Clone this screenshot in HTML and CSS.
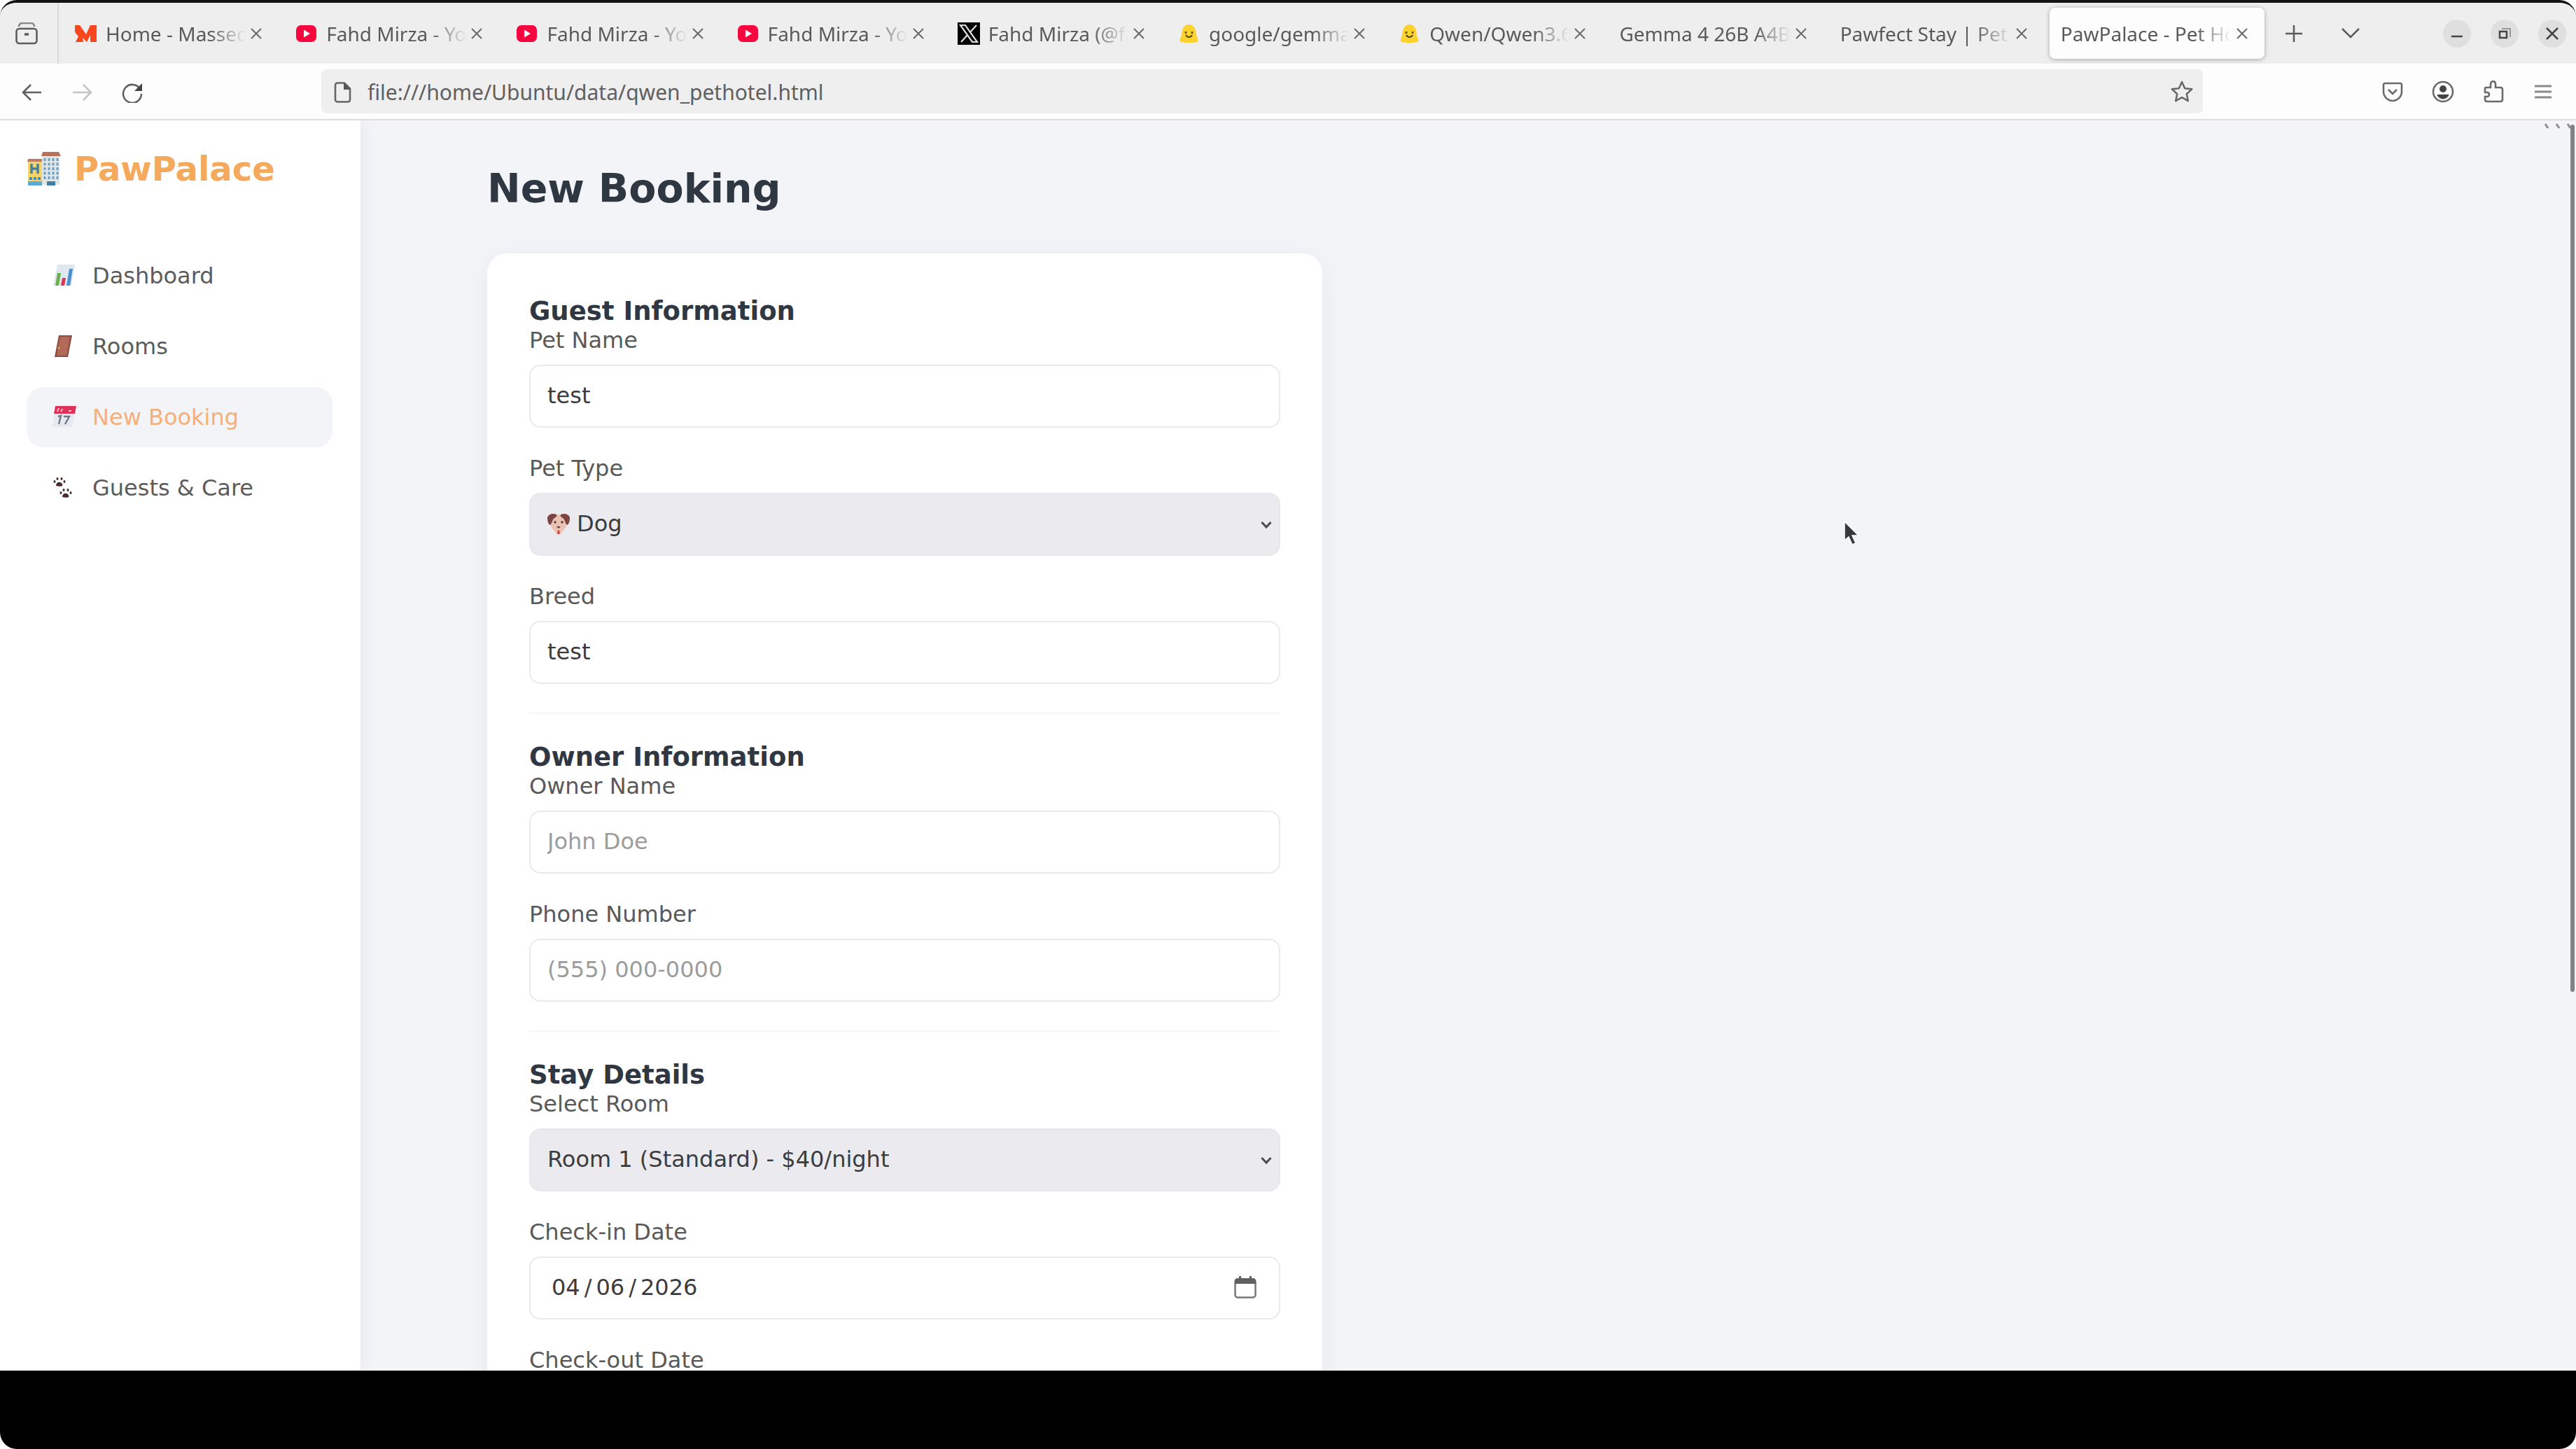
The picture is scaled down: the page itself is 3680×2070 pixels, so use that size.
FILE: index.html
```html
<!DOCTYPE html>
<html lang="en-US">
<head>
<meta charset="utf-8">
<title>PawPalace - Pet Hotel</title>
<link rel="stylesheet" href="styles.css">
</head>
<body>
<svg class="defs" aria-hidden="true">
  <symbol id="close" viewBox="0 0 18 18"><path d="M2 2l14 14M16 2L2 16" fill="none" stroke="#6a6a6a" stroke-width="2"/></symbol>
  <symbol id="tube" viewBox="0 0 32 32"><rect x="1" y="4" width="29" height="24" rx="7" fill="#f5063f"/><path d="M12 10.500l9 5.500-9 5.500z" fill="#fff"/></symbol>
  <symbol id="hug" viewBox="0 0 32 32"><path d="M3 28c-1-4 1-7 2-9C5 9 9 3 15.500 3S26 9 26 19c1 2 3 5 2 9-8 1.500-17 1.500-25 0z" fill="#fcd22f"/><path d="M11 13v3M20 13v3" stroke="#5b4a20" stroke-width="2.500"/><path d="M11 18c2 4 7 4 9 0" fill="none" stroke="#5b4a20" stroke-width="2"/></symbol>
  <symbol id="chev" viewBox="0 0 16 12"><path d="M1.500 2L8 9l6.500-7" fill="none" stroke="#4a4a50" stroke-width="3"/></symbol>
</svg>
<div class="window">
  <header class="tabbar">
    <button class="recent" aria-label="Recent browsing"><svg class="icon" viewBox="0 0 32 32" fill="none" stroke="#5c5c5c" stroke-width="2.600"><rect x="1.500" y="9" width="29" height="21" rx="4"/><path d="M5 6c0-3 2-5 5-5h12c3 0 5 2 5 5" stroke="#888"/><path d="M13 17h6" stroke-width="3.500"/></svg></button>
    <nav class="tabs" aria-label="Tabs">
      <div class="tab"><svg class="icon" viewBox="0 0 32 32"><path d="M0 4h7l9 13 6-13h9v24h-9V18l-5 10-6-6 1 6H1l4-8-5-6z" fill="#f9461c"/></svg><button class="title">Home - Massed Compute</button><button class="x" aria-label="Close tab"><svg><use href="#close"/></svg></button></div>
      <div class="tab"><svg class="icon"><use href="#tube"/></svg><button class="title">Fahd Mirza - YouTube</button><button class="x" aria-label="Close tab"><svg><use href="#close"/></svg></button></div>
      <div class="tab"><svg class="icon"><use href="#tube"/></svg><button class="title">Fahd Mirza - YouTube</button><button class="x" aria-label="Close tab"><svg><use href="#close"/></svg></button></div>
      <div class="tab"><svg class="icon"><use href="#tube"/></svg><button class="title">Fahd Mirza - YouTube</button><button class="x" aria-label="Close tab"><svg><use href="#close"/></svg></button></div>
      <div class="tab"><svg class="icon" viewBox="0 0 32 32"><path d="M0 0h32v32H0z"/><path d="M4 4h7l17 24h-7zM27 4L17.500 14.500M5 28l9.500-10.500" fill="none" stroke="#ddd" stroke-width="2.200"/></svg><button class="title">Fahd Mirza (@fahdmirza)</button><button class="x" aria-label="Close tab"><svg><use href="#close"/></svg></button></div>
      <div class="tab"><svg class="icon"><use href="#hug"/></svg><button class="title">google/gemma-4</button><button class="x" aria-label="Close tab"><svg><use href="#close"/></svg></button></div>
      <div class="tab"><svg class="icon"><use href="#hug"/></svg><button class="title">Qwen/Qwen3.6</button><button class="x" aria-label="Close tab"><svg><use href="#close"/></svg></button></div>
      <div class="tab"><button class="title">Gemma 4 26B A4B vs</button><button class="x" aria-label="Close tab"><svg><use href="#close"/></svg></button></div>
      <div class="tab"><button class="title">Pawfect Stay | Pet Hotel</button><button class="x" aria-label="Close tab"><svg><use href="#close"/></svg></button></div>
      <div class="tab active"><button class="title">PawPalace - Pet Hotel</button><button class="x" aria-label="Close tab"><svg><use href="#close"/></svg></button></div>
    </nav>
    <div class="tabtools">
      <button aria-label="New tab"><svg class="icon" viewBox="0 0 32 32"><path d="M16 4v24M4 16h24" stroke="#5a5a5a" stroke-width="2.500"/></svg></button>
      <button aria-label="List all tabs"><svg class="icon" viewBox="0 0 32 32"><path d="M4 9l12 12L28 9" fill="none" stroke="#5a5a5a" stroke-width="2.500"/></svg></button>
      <div class="wincontrols">
        <button aria-label="Minimize"><svg viewBox="0 0 40 40"><path d="M12 24h16" stroke="#444" stroke-width="2.500"/></svg></button>
        <button aria-label="Restore"><svg viewBox="0 0 40 40" fill="none"><path d="M16 13h12v12" stroke="#999" stroke-width="2"/><rect x="13" y="17" width="10" height="9" stroke="#444" stroke-width="2.500"/></svg></button>
        <button aria-label="Close"><svg viewBox="0 0 40 40"><path d="M12 12l16 16M28 12L12 28" stroke="#444" stroke-width="2.500"/></svg></button>
      </div>
    </div>
  </header>
  <div class="toolbar">
    <div class="history">
      <button aria-label="Back"><svg class="icon" viewBox="0 0 32 32"><path d="M29 17H3M14 6L3 17l11 11" fill="none" stroke="#5f5f5f" stroke-width="2.600"/></svg></button>
      <button aria-label="Forward"><svg class="icon" viewBox="0 0 32 32"><path d="M2 17h26M17 6l11 11-11 11" fill="none" stroke="#c4c4c4" stroke-width="2.600"/></svg></button>
      <button aria-label="Reload"><svg class="icon" viewBox="0 0 32 32"><path d="M26 12A13 13 0 1 0 28 19" fill="none" stroke="#5f5f5f" stroke-width="2.600"/><path d="M29 4v11H18z" fill="#444"/></svg></button>
    </div>
    <div class="urlbar">
      <svg class="icon" viewBox="0 0 32 32"><path d="M9 3.500h10l8 8V27c0 2-1 3.500-3 3.500H9c-2 0-3-1.500-3-3.500V7c0-2 1-3.500 3-3.500z" fill="none" stroke="#666" stroke-width="2.600"/><path d="M18 3l10 10H18z" fill="#555"/></svg>
      <input type="text" aria-label="Address" value="file:///home/Ubuntu/data/qwen_pethotel.html">
      <button aria-label="Bookmark this page"><svg class="icon" viewBox="0 0 32 32"><path d="M16 2l4.200 9.200 10 1.200-7.400 6.800 2 10L16 24.200 7.200 29.200l2-10L1.800 12.400l10-1.200z" fill="none" stroke="#6a6a6a" stroke-width="2.600" stroke-linejoin="round"/></svg></button>
    </div>
    <div class="actions">
      <button aria-label="Save to Pocket"><svg class="icon" viewBox="0 0 32 32" fill="none" stroke="#6a6a6a" stroke-width="2.600"><path d="M5 4h22c1 0 2 1 2 2v10c0 7-6 13-13 13S3 23 3 16V6c0-1 1-2 2-2z"/><path d="M10 13l6 6 6-6"/></svg></button>
      <button aria-label="Account"><svg class="icon" viewBox="0 0 32 32"><circle cx="16" cy="16" r="14" fill="none" stroke="#6a6a6a" stroke-width="2.600"/><circle cx="16" cy="12" r="5" fill="#444"/><path d="M7.500 20h17c-1 4-5 6.500-8.500 6.500S8.500 24 7.500 20z" fill="#444"/></svg></button>
      <button aria-label="Extensions"><svg class="icon" viewBox="0 0 32 32"><path d="M5 10h7V5c0-5 7-5 7 0v5h7c2 0 3 1 3 3v14c0 2-1 3-3 3H7c-2 0-3-1-3-3v-4h3c4 0 4-6 0-6H4v-5c0-1 0-2 1-2z" fill="none" stroke="#6a6a6a" stroke-width="2.600"/></svg></button>
      <button aria-label="Menu"><svg class="icon" viewBox="0 0 32 32"><path d="M3 8h24M3 16h24M3 24h24" stroke="#8a8a8a" stroke-width="3"/></svg></button>
    </div>
  </div>
  <div class="page">
    <aside class="sidebar">
      <div class="logo">
        <svg viewBox="0 0 50 50"><path d="M2 14h20v34H2z" fill="#f3d36b"/><path d="M2 11h20v4H1z" fill="#c07a5e"/><path d="M22 6h25v42H22z" fill="#dfe6e6"/><path d="M23 1h23l3 6H21z" fill="#b97259"/><path d="M7 18v14M16 18v14M7 25h9" stroke="#4b7f96" stroke-width="3.500"/><path d="M4 37h4v4H4zM10 37h4v4h-4zM16 37h4v4h-4z" fill="#4b8cae"/><path d="M2 43h20v6H2z" fill="#5aa9d6"/><path d="M26 10v30M32 10v30M38 10v30M44 10v30" stroke="#6d9fc6" stroke-width="3" stroke-dasharray="4 2.500"/><path d="M29 43h12v6H29z" fill="#3f7fa6"/></svg>
        <span>PawPalace</span>
      </div>
      <nav class="menu" aria-label="Main">
        <a href="#dashboard"><svg viewBox="0 0 36 36"><path d="M8 2h25l-5 30H2z" fill="#dfe8ee"/><path d="M8 14h5l-3 18H5z" fill="#6fae4e"/><path d="M15 21h5l-2 11h-5z" fill="#d8395a"/><path d="M25 8h5l-4 24h-5z" fill="#4a90cf"/></svg>Dashboard</a>
        <a href="#rooms"><svg viewBox="0 0 36 36"><path d="M10 2h19l-6 31H4z" fill="#8f4d40"/><path d="M12 4h14l-5 27H7z" fill="#b36a58"/><circle cx="10" cy="20" r="1.500" fill="#e0b060"/></svg>Rooms</a>
        <a href="#booking" class="active" aria-current="page"><svg viewBox="0 0 36 36"><path d="M5 4h29l-5 28H1z" fill="#e6eaf0"/><path d="M5 2h30l-2 11H3z" fill="#dd3358"/><path d="M8 10l2-5M13 10l2-4M24 9h4" stroke="#f6b9c6" stroke-width="2"/><path d="M9 17l4-1-3 12M17 17h8l-6 11" fill="none" stroke="#6d7883" stroke-width="2.400"/></svg>New Booking</a>
        <a href="#guests"><svg viewBox="0 0 36 36" fill="#4a2b2c"><path d="M6 15c0-4 3-6 6-5s4 4 3 5-6 1-9 0z"/><ellipse cx="4" cy="9" rx="1.500" ry="2"/><ellipse cx="8" cy="5" rx="1.500" ry="2"/><ellipse cx="14" cy="5" rx="1.500" ry="2"/><ellipse cx="18" cy="9" rx="1.500" ry="2"/><path d="M15 31c0-4 3-6 6-5s4 4 3 5-6 1-9 0z"/><ellipse cx="13" cy="25" rx="1.500" ry="2"/><ellipse cx="17" cy="21" rx="1.500" ry="2"/><ellipse cx="23" cy="21" rx="1.500" ry="2"/><ellipse cx="27" cy="25" rx="1.500" ry="2"/></svg>Guests &amp; Care</a>
      </nav>
    </aside>
    <main class="content">
      <h1>New Booking</h1>
      <form class="card">
        <section>
          <h2>Guest Information</h2>
          <div class="fields">
            <div class="field"><label for="pet">Pet Name</label><input id="pet" type="text" value="test"></div>
            <div class="field"><label for="type">Pet Type</label>
              <div class="select has-pet"><select id="type"><option>Dog</option></select>
                <svg class="pet" viewBox="0 0 32 32"><path d="M5 5C9 1 23 1 27 5l1 11c-2 7-7 9-9 14h-6c-2-5-7-7-9-14z" fill="#ecc3b3"/><path d="M13 2C8 0 2 1 0 6c0 5 1 10 4 11 3-3 3-8 6-10 2-1 4-2 3-5zM19 2c5-2 11-1 13 4 0 5-1 10-4 11-3-3-3-8-6-10-2-1-4-2-3-5z" fill="#7c4443"/><circle cx="11" cy="13" r="1.700" fill="#59383a"/><circle cx="21" cy="13" r="1.700" fill="#59383a"/><path d="M13 19h6l-3 3z" fill="#59383a"/><path d="M14.500 25h3v5h-3z" fill="#c9423f"/></svg>
                <svg class="arrow"><use href="#chev"/></svg></div></div>
            <div class="field"><label for="breed">Breed</label><input id="breed" type="text" value="test"></div>
          </div>
        </section>
        <section>
          <h2>Owner Information</h2>
          <div class="fields">
            <div class="field"><label for="owner">Owner Name</label><input id="owner" type="text" placeholder="John Doe"></div>
            <div class="field"><label for="phone">Phone Number</label><input id="phone" type="tel" placeholder="(555) 000-0000"></div>
          </div>
        </section>
        <section>
          <h2>Stay Details</h2>
          <div class="fields">
            <div class="field"><label for="room">Select Room</label>
              <div class="select"><select id="room"><option>Room 1 (Standard) - $40/night</option></select><svg class="arrow"><use href="#chev"/></svg></div></div>
            <div class="field"><label for="in">Check-in Date</label><input id="in" type="date" value="2026-04-06"></div>
            <div class="field"><label for="out">Check-out Date</label><input id="out" type="date"></div>
          </div>
        </section>
      </form>
    </main>
    <svg class="ticks" viewBox="0 0 40 8"><path d="M2 1l4 6M18 1l4 6M34 1l4 6" stroke="#8b8d91" stroke-width="3"/></svg>
    <div class="scrollbar"></div>
    <svg class="cursor" viewBox="0 0 24 36"><path d="M2 1v27l6-5 5 11 5-2-5-11h9z" fill="#38393d" stroke="#fff" stroke-width="1.500"/></svg>
  </div>
  <footer class="letterbox"></footer>
</div>
</body>
</html>
```
FILE: styles.css
```css
* { box-sizing: border-box; }
body { margin: 0; background: #fff; font-family: "DejaVu Sans", sans-serif; font-size: 32px; line-height: 38px; color: #595959; }
button { border: 0; padding: 0; background: none; font: inherit; color: inherit; display: flex; align-items: center; justify-content: center; }
h1, h2 { margin: 0; color: #2f3742; }
.defs { display: none; }
.window { height: 100vh; display: flex; flex-direction: column; overflow: hidden; border-top: 4px solid #141414; border-radius: 24px; }
.icon { width: 32px; height: 32px; flex: none; display: block; }

/* Browser tabs */
.tabbar { height: 87px; flex: none; display: flex; background: #eee; font: 28px/36px "Noto Sans", sans-serif; color: #5a5a5a; }
.recent { width: 84px; flex: none; border-right: 2px solid #d8d8d8; padding-right: 6px; }
.tabs { flex: 1; min-width: 0; display: flex; gap: 8px; padding: 7px 0 7px 7px; }
.tab { flex: 1 1 0; min-width: 0; display: flex; align-items: center; padding: 0 23px 0 16px; border-radius: 8px; }
.tab .icon { margin-right: 12px; }
.tab.active { background: #fdfdfd; box-shadow: 0 1px 6px rgba(0, 0, 0, .3); }
.title { flex: 1; min-width: 0; overflow: hidden; white-space: nowrap; justify-content: flex-start; mask-image: linear-gradient(to left, transparent 0, #000 52px); }
.x { margin-left: 6px; flex: none; }
.x svg { width: 18px; height: 18px; display: block; }
.tabtools { width: 445px; flex: none; display: flex; align-items: center; gap: 49px; padding: 0 14px 0 26px; }
.wincontrols { margin-left: auto; display: flex; gap: 28px; }
.wincontrols button { width: 40px; height: 40px; border-radius: 50%; background: #dfdfdf; }
.wincontrols svg { width: 40px; height: 40px; }

/* Address bar */
.toolbar { height: 81px; flex: none; display: flex; align-items: center; background: #fdfdfd; border-bottom: 2px solid #dcdcdf; }
.history { width: 459px; flex: none; display: flex; gap: 40px; padding-left: 30px; }
.urlbar { flex: 1; min-width: 0; height: 63px; display: flex; align-items: center; gap: 20px; padding: 0 14px; border-radius: 8px; background: #efefef; }
.urlbar input { flex: 1; min-width: 0; height: 42px; border: 0; padding: 2px 0 0; background: none; font: 30px/40px "Noto Sans", sans-serif; color: #606060; }
.actions { width: 533px; flex: none; display: flex; justify-content: flex-end; gap: 40px; padding-right: 30px; }

/* Page */
.page { position: relative; flex: 1; min-height: 0; display: flex; overflow: hidden; background: #f3f4f8; }
.sidebar { width: 515px; flex: none; padding: 37px 40px 0 38px; background: #fff; box-shadow: 4px 0 20px rgba(0, 0, 0, .05); }
.logo { display: flex; align-items: center; gap: 18px; height: 64px; font-size: 48px; line-height: 56px; font-weight: bold; color: #f4a95d; }
.logo svg { width: 50px; height: 50px; }
.menu { display: flex; flex-direction: column; gap: 15px; margin-top: 78px; }
.menu a { display: flex; align-items: center; gap: 22px; padding: 24px 36px; border-radius: 24px; color: #5c5c5c; text-decoration: none; }
.menu svg { width: 36px; height: 36px; }
.menu a.active { background: #f3f4f7; color: #f5b07a; }

.content { flex: 1; min-width: 0; padding: 64px 181px 0; }
h1 { font-size: 57px; line-height: 66px; }
.card { max-width: 1193px; margin-top: 60px; padding: 61px 60px; border-radius: 28px; background: #fff; box-shadow: 0 8px 40px rgba(0, 0, 0, .05); }
h2 { font-size: 37px; line-height: 44px; }
section + section { margin-top: 41px; padding-top: 40px; border-top: 2px solid #f6f6f8; }
.fields { display: flex; flex-direction: column; gap: 39px; }
.field { display: flex; flex-direction: column; gap: 16px; }
.field input, .field select { display: block; width: 100%; height: 90px; padding: 0 24px 2px; border: 2px solid #eaeaec; border-radius: 16px; background: #fff; font: inherit; color: #3c3c40; appearance: none; }
.field input::placeholder { color: #9c9c9c; opacity: 1; }
.field select { background: #ebebef; border-color: #e8e8ec; }
.select { position: relative; }
.field .has-pet select { padding-left: 66px; }
.pet { position: absolute; left: 26px; top: 29px; width: 32px; height: 32px; }
.arrow { position: absolute; right: 12px; top: 40px; width: 16px; height: 12px; }
.field input[type="date"] { padding: 0 31px 2px 30px; }
::-webkit-datetime-edit-text { padding: 0 6px; }
::-webkit-datetime-edit-fields-wrapper, ::-webkit-datetime-edit { padding: 0; }
::-webkit-datetime-edit-month-field, ::-webkit-datetime-edit-day-field, ::-webkit-datetime-edit-year-field { padding: 0; }
::-webkit-calendar-picker-indicator { width: 34px; height: 34px; padding: 0; margin: 0; background: url("data:image/svg+xml,%3Csvg xmlns='http://www.w3.org/2000/svg' viewBox='0 0 34 34'%3E%3Crect x='2.500' y='5.500' width='29' height='26' rx='4' fill='none' stroke='%23777' stroke-width='2.500'/%3E%3Cpath d='M2 12V8c0-2 1-4 4-4h2V1h3v3h12V1h3v3h2c3 0 4 2 4 4v4z' fill='%23606060'/%3E%3C/svg%3E") center / 34px 34px no-repeat; }

.ticks { position: absolute; right: 6px; top: 4px; width: 40px; height: 8px; }
.scrollbar { position: absolute; right: 2px; top: 6px; width: 6px; height: 1239px; border-radius: 3px; background: #808286; }
.cursor { position: absolute; left: 2633px; top: 572px; width: 24px; height: 36px; }
.letterbox { height: 112px; flex: none; background: #000; }
```
